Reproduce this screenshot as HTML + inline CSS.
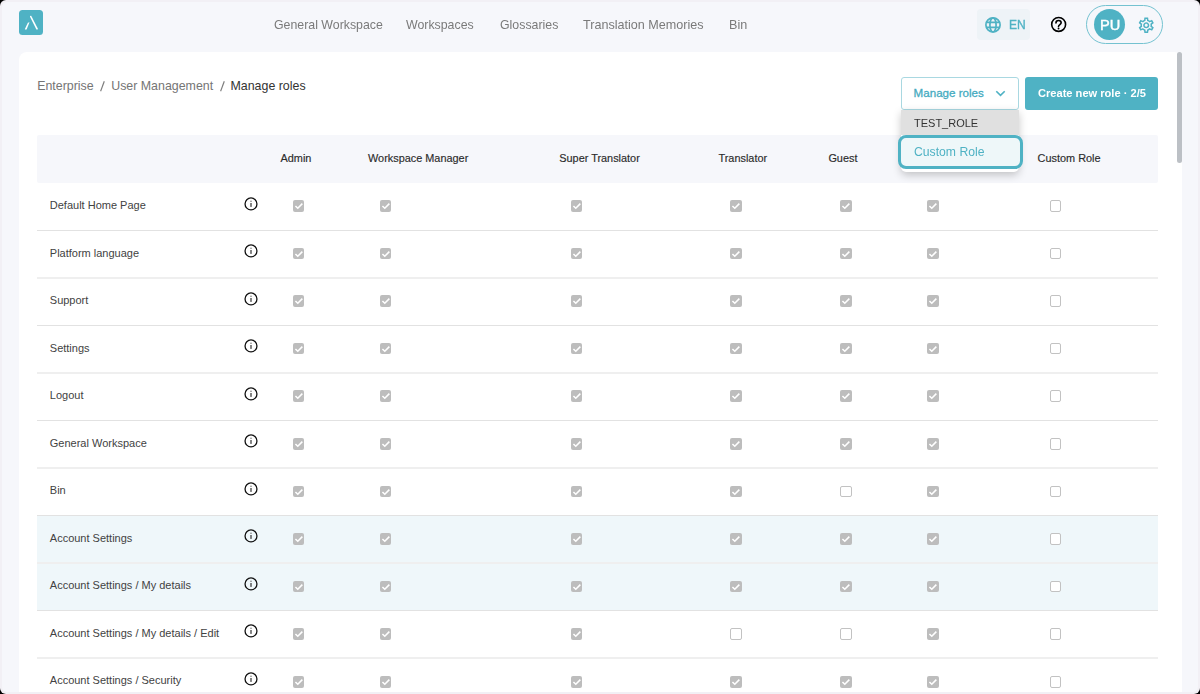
<!DOCTYPE html>
<html><head><meta charset="utf-8"><style>
html,body{margin:0;padding:0;width:1200px;height:694px;overflow:hidden;background:#000;}
*{box-sizing:border-box;}
.frame{position:absolute;left:0;top:0;width:1200px;height:694px;border-radius:6px;background:#f2f0f5;overflow:hidden;}
.page{position:absolute;left:2px;top:2px;width:1196px;height:690px;border-radius:5px;background:#f6f7fb;overflow:hidden;}
.abs{position:absolute;}
.t{position:absolute;white-space:nowrap;line-height:1;font-family:"Liberation Sans",sans-serif;}
.card{position:absolute;left:19px;top:52px;width:1163px;height:660px;background:#fff;border-radius:8px;}
.cb{position:absolute;width:11.7px;height:11.7px;border-radius:2px;}
.cb.on{background:#bdbdbd;}
.cb.off{border:1.7px solid #c2c2c2;background:#fff;}
.info{position:absolute;width:14px;height:14px;}
</style></head><body>
<div class="frame"><div class="page" id="pg">
<div class="abs" style="left:-2px;top:-2px;width:1200px;height:694px;">
<div class="abs" style="left:19px;top:10px;width:24.2px;height:24.8px;background:#4fb2c4;border-radius:3.5px;"></div>
<svg class="abs" style="left:19px;top:10px" width="25" height="25" viewBox="0 0 25 25"><path d="M10.9 6.4 Q11.1 5.4 12.2 5.7 L19.0 19.0 Q18.9 19.4 18.4 19.4 L17.4 19.4 Z" fill="#fff"/><path d="M8.9 12.8 L10.5 12.2 L7.7 19.2 Q7.5 19.4 7.1 19.4 L6.1 19.4 Q5.8 19.3 5.9 19.0 Z" fill="#fff"/></svg>
<div class="t" style="left:274.00px;top:18.85px;font-size:12.35px;color:#7a7a7a;font-weight:400;;will-change:transform">General Workspace</div>
<div class="t" style="left:406.00px;top:18.85px;font-size:12.35px;color:#7a7a7a;font-weight:400;;will-change:transform">Workspaces</div>
<div class="t" style="left:499.50px;top:18.85px;font-size:12.35px;color:#7a7a7a;font-weight:400;;will-change:transform">Glossaries</div>
<div class="t" style="left:582.70px;top:18.63px;font-size:12.6px;color:#7a7a7a;font-weight:400;;will-change:transform">Translation Memories</div>
<div class="t" style="left:728.80px;top:18.63px;font-size:12.6px;color:#7a7a7a;font-weight:400;;will-change:transform">Bin</div>
<div class="abs" style="left:977px;top:9.2px;width:53px;height:31px;background:#eef3f7;border-radius:4px;"></div>
<svg class="abs" style="left:984px;top:16px" width="18" height="18" viewBox="0 0 18 18"><g stroke="#4fb2c4" stroke-width="1.7" fill="none"><circle cx="9" cy="8.9" r="7.1"/><path d="M2.2 6.45H15.8M2.2 11.35H15.8"/><ellipse cx="9" cy="8.9" rx="3.1" ry="7.1"/></g></svg>
<div class="t" style="left:1008.80px;top:18.74px;font-size:12.0px;color:#4fb2c4;font-weight:400;-webkit-text-stroke:0.35px #4fb2c4;will-change:transform">EN</div>
<svg class="abs" style="left:1050px;top:15.9px" width="17" height="17" viewBox="0 0 17 17"><circle cx="8.64" cy="8.46" r="6.95" stroke="#000" stroke-width="1.6" fill="none"/>
<path d="M5.95 6.9C5.95 5.3 7.1 4.45 8.55 4.45C10.1 4.45 11.15 5.4 11.15 6.8C11.15 8.5 8.6 8.8 8.5 10.5" stroke="#000" stroke-width="1.6" fill="none" stroke-linecap="round"/><circle cx="8.55" cy="12.55" r="0.95" fill="#000"/></svg>
<div class="abs" style="left:1086.3px;top:5px;width:76.7px;height:39.3px;border:1.1px solid #74c2d0;border-radius:20px;"></div>
<div class="abs" style="left:1093.8px;top:9px;width:31.1px;height:31.1px;background:#4fb2c4;border-radius:50%;"></div>
<div class="t" style="left:1099.80px;top:17.94px;font-size:14.6px;color:#fff;font-weight:400;-webkit-text-stroke:0.45px #fff;will-change:transform">PU</div>
<svg class="abs" style="left:1137.2px;top:15.5px" width="18.5" height="18.5" viewBox="0 0 24 24"><path fill="#4fb2c4" d="M19.43 12.98c.04-.32.07-.64.07-.98 0-.34-.03-.66-.07-.98l2.11-1.650c.19-.15.24-.42.12-.64l-2-3.46c-.09-.16-.26-.25-.44-.25-.06 0-.12.01-.17.03l-2.49 1c-.52-.4-1.08-.73-1.690-.98l-.38-2.65C14.46 2.18 14.25 2 14 2h-4c-.25 0-.46.18-.49.42l-.38 2.65c-.61.25-1.17.59-1.69.98l-2.49-1c-.06-.02-.12-.03-.18-.03-.17 0-.34.09-.43.25l-2 3.46c-.13.22-.07.49.12.64l2.11 1.65c-.04.32-.07.65-.07.98 0 .33.03.66.07.98l-2.11 1.65c-.19.15-.24.42-.12.64l2 3.46c.09.16.26.25.44.25.06 0 .12-.01.17-.03l2.49-1c.52.4 1.08.73 1.69.98l.38 2.65c.03.24.24.42.49.42h4c.25 0 .46-.18.49-.42l.38-2.65c.61-.25 1.17-.59 1.69-.98l2.49 1c.06.02.12.03.18.03.17 0 .34-.09.43-.25l2-3.46c.12-.22.07-.49-.12-.64l-2.11-1.65zm-1.98-1.71c.04.31.05.52.05.73 0 .21-.02.43-.05.73l-.14 1.13.89.7 1.08.84-.7 1.21-1.27-.51-1.04-.42-.9.68c-.43.32-.84.56-1.25.73l-1.06.43-.16 1.13-.2 1.35h-1.4l-.19-1.35-.16-1.13-1.06-.43c-.43-.18-.83-.41-1.23-.71l-.91-.7-1.06.43-1.27.51-.7-1.21 1.08-.84.89-.7-.14-1.130c-.03-.31-.05-.54-.05-.74s.02-.43.05-.73l.14-1.13-.89-.7-1.08-.84.7-1.21 1.27.51 1.04.42.9-.68c.43-.32.84-.56 1.25-.73l1.06-.43.16-1.13.2-1.35h1.39l.19 1.35.16 1.13 1.06.43c.43.18.83.41 1.23.71l.91.7 1.06-.43 1.27-.51.7 1.21-1.07.85-.89.7.14 1.13zM12 8c-2.21 0-4 1.79-4 4s1.79 4 4 4 4-1.79 4-4-1.79-4-4-4zm0 6c-1.1 0-2-.9-2-2s.9-2 2-2 2 .9 2 2-.9 2-2 2z"/></svg>
<div class="card"></div>
<div class="abs" style="left:1177px;top:52px;width:4.5px;height:110.5px;background:#bcc0c5;border-radius:3px;"></div>
<div class="t" style="left:37.20px;top:80.00px;font-size:12.4px;color:#757575;font-weight:400;">Enterprise</div>
<svg class="abs" style="left:96px;top:76px" width="14" height="20"><path d="M8.3 5.2 L4.6 15.3" stroke="#7d7d7d" stroke-width="1.15"/></svg>
<div class="t" style="left:111.20px;top:80.00px;font-size:12.4px;color:#757575;font-weight:400;">User Management</div>
<svg class="abs" style="left:216px;top:76px" width="14" height="20"><path d="M8.3 5.2 L4.6 15.3" stroke="#7d7d7d" stroke-width="1.15"/></svg>
<div class="t" style="left:230.50px;top:80.00px;font-size:12.4px;color:#333;font-weight:400;">Manage roles</div>
<div class="abs" style="left:1025px;top:77px;width:133px;height:32.5px;background:#4fb2c4;border-radius:3px;"></div>
<div class="t" style="left:1037.50px;top:87.80px;font-size:11.1px;color:#fff;font-weight:700;;will-change:transform">Create new role · 2/5</div>
<div class="abs" style="left:37.3px;top:134.5px;width:1120.7px;height:48px;background:#f6f7fb;border-radius:2px;"></div>
<div class="t" style="left:280.50px;top:152.77px;font-size:10.9px;color:#2b2b2b;font-weight:400;-webkit-text-stroke:0.15px #2b2b2b">Admin</div>
<div class="t" style="left:368.00px;top:152.77px;font-size:10.9px;color:#2b2b2b;font-weight:400;-webkit-text-stroke:0.15px #2b2b2b">Workspace Manager</div>
<div class="t" style="left:559.30px;top:152.77px;font-size:10.9px;color:#2b2b2b;font-weight:400;-webkit-text-stroke:0.15px #2b2b2b">Super Translator</div>
<div class="t" style="left:718.50px;top:152.77px;font-size:10.9px;color:#2b2b2b;font-weight:400;-webkit-text-stroke:0.15px #2b2b2b">Translator</div>
<div class="t" style="left:828.40px;top:152.77px;font-size:10.9px;color:#2b2b2b;font-weight:400;-webkit-text-stroke:0.15px #2b2b2b">Guest</div>
<div class="t" style="left:915.50px;top:152.77px;font-size:10.9px;color:#2b2b2b;font-weight:400;-webkit-text-stroke:0.15px #2b2b2b">TEST_ROLE</div>
<div class="t" style="left:1037.60px;top:152.77px;font-size:10.9px;color:#2b2b2b;font-weight:400;-webkit-text-stroke:0.15px #2b2b2b">Custom Role</div>
<div class="abs" style="left:37px;top:515px;width:1121px;height:95px;background:#eff7fa;"></div>
<div class="abs" style="left:37px;top:230px;width:1121px;height:1px;background:#e2e2e2;"></div>
<div class="abs" style="left:37px;top:277px;width:1121px;height:2px;background:#efefef;"></div>
<div class="abs" style="left:37px;top:325px;width:1121px;height:1px;background:#e2e2e2;"></div>
<div class="abs" style="left:37px;top:372px;width:1121px;height:2px;background:#efefef;"></div>
<div class="abs" style="left:37px;top:420px;width:1121px;height:1px;background:#e2e2e2;"></div>
<div class="abs" style="left:37px;top:467px;width:1121px;height:2px;background:#efefef;"></div>
<div class="abs" style="left:37px;top:515px;width:1121px;height:1px;background:#e2e2e2;"></div>
<div class="abs" style="left:37px;top:562px;width:1121px;height:2px;background:#efefef;"></div>
<div class="abs" style="left:37px;top:610px;width:1121px;height:1px;background:#e2e2e2;"></div>
<div class="abs" style="left:37px;top:657px;width:1121px;height:2px;background:#efefef;"></div>
<div class="abs" style="left:37px;top:705px;width:1121px;height:1px;background:#e2e2e2;"></div>
<div class="t" style="left:49.80px;top:200.09px;font-size:11px;color:#424242;font-weight:400;">Default Home Page</div>
<svg class="info" style="left:244.1px;top:196.60px" viewBox="0 0 14 14"><circle cx="7" cy="6.9" r="5.95" stroke="#111" stroke-width="1.3" fill="none"/><rect x="6.45" y="6.0" width="1.1" height="3.9" fill="#222"/><rect x="6.45" y="3.7" width="1.1" height="1.1" fill="#444"/></svg>
<svg class="cb on" style="left:292.50px;top:199.90px" viewBox="0 0 12 12"><path d="M2.5 6.2 L4.9 8.5 L9.6 3.7" stroke="#fff" stroke-width="1.6" fill="none"/></svg>
<svg class="cb on" style="left:379.60px;top:199.90px" viewBox="0 0 12 12"><path d="M2.5 6.2 L4.9 8.5 L9.6 3.7" stroke="#fff" stroke-width="1.6" fill="none"/></svg>
<svg class="cb on" style="left:570.60px;top:199.90px" viewBox="0 0 12 12"><path d="M2.5 6.2 L4.9 8.5 L9.6 3.7" stroke="#fff" stroke-width="1.6" fill="none"/></svg>
<svg class="cb on" style="left:730.40px;top:199.90px" viewBox="0 0 12 12"><path d="M2.5 6.2 L4.9 8.5 L9.6 3.7" stroke="#fff" stroke-width="1.6" fill="none"/></svg>
<svg class="cb on" style="left:839.90px;top:199.90px" viewBox="0 0 12 12"><path d="M2.5 6.2 L4.9 8.5 L9.6 3.7" stroke="#fff" stroke-width="1.6" fill="none"/></svg>
<svg class="cb on" style="left:927.10px;top:199.90px" viewBox="0 0 12 12"><path d="M2.5 6.2 L4.9 8.5 L9.6 3.7" stroke="#fff" stroke-width="1.6" fill="none"/></svg>
<div class="cb off" style="left:1049.80px;top:199.90px"></div>
<div class="t" style="left:49.80px;top:247.59px;font-size:11px;color:#424242;font-weight:400;">Platform language</div>
<svg class="info" style="left:244.1px;top:244.10px" viewBox="0 0 14 14"><circle cx="7" cy="6.9" r="5.95" stroke="#111" stroke-width="1.3" fill="none"/><rect x="6.45" y="6.0" width="1.1" height="3.9" fill="#222"/><rect x="6.45" y="3.7" width="1.1" height="1.1" fill="#444"/></svg>
<svg class="cb on" style="left:292.50px;top:247.50px" viewBox="0 0 12 12"><path d="M2.5 6.2 L4.9 8.5 L9.6 3.7" stroke="#fff" stroke-width="1.6" fill="none"/></svg>
<svg class="cb on" style="left:379.60px;top:247.50px" viewBox="0 0 12 12"><path d="M2.5 6.2 L4.9 8.5 L9.6 3.7" stroke="#fff" stroke-width="1.6" fill="none"/></svg>
<svg class="cb on" style="left:570.60px;top:247.50px" viewBox="0 0 12 12"><path d="M2.5 6.2 L4.9 8.5 L9.6 3.7" stroke="#fff" stroke-width="1.6" fill="none"/></svg>
<svg class="cb on" style="left:730.40px;top:247.50px" viewBox="0 0 12 12"><path d="M2.5 6.2 L4.9 8.5 L9.6 3.7" stroke="#fff" stroke-width="1.6" fill="none"/></svg>
<svg class="cb on" style="left:839.90px;top:247.50px" viewBox="0 0 12 12"><path d="M2.5 6.2 L4.9 8.5 L9.6 3.7" stroke="#fff" stroke-width="1.6" fill="none"/></svg>
<svg class="cb on" style="left:927.10px;top:247.50px" viewBox="0 0 12 12"><path d="M2.5 6.2 L4.9 8.5 L9.6 3.7" stroke="#fff" stroke-width="1.6" fill="none"/></svg>
<div class="cb off" style="left:1049.80px;top:247.50px"></div>
<div class="t" style="left:49.80px;top:295.09px;font-size:11px;color:#424242;font-weight:400;">Support</div>
<svg class="info" style="left:244.1px;top:291.60px" viewBox="0 0 14 14"><circle cx="7" cy="6.9" r="5.95" stroke="#111" stroke-width="1.3" fill="none"/><rect x="6.45" y="6.0" width="1.1" height="3.9" fill="#222"/><rect x="6.45" y="3.7" width="1.1" height="1.1" fill="#444"/></svg>
<svg class="cb on" style="left:292.50px;top:295.10px" viewBox="0 0 12 12"><path d="M2.5 6.2 L4.9 8.5 L9.6 3.7" stroke="#fff" stroke-width="1.6" fill="none"/></svg>
<svg class="cb on" style="left:379.60px;top:295.10px" viewBox="0 0 12 12"><path d="M2.5 6.2 L4.9 8.5 L9.6 3.7" stroke="#fff" stroke-width="1.6" fill="none"/></svg>
<svg class="cb on" style="left:570.60px;top:295.10px" viewBox="0 0 12 12"><path d="M2.5 6.2 L4.9 8.5 L9.6 3.7" stroke="#fff" stroke-width="1.6" fill="none"/></svg>
<svg class="cb on" style="left:730.40px;top:295.10px" viewBox="0 0 12 12"><path d="M2.5 6.2 L4.9 8.5 L9.6 3.7" stroke="#fff" stroke-width="1.6" fill="none"/></svg>
<svg class="cb on" style="left:839.90px;top:295.10px" viewBox="0 0 12 12"><path d="M2.5 6.2 L4.9 8.5 L9.6 3.7" stroke="#fff" stroke-width="1.6" fill="none"/></svg>
<svg class="cb on" style="left:927.10px;top:295.10px" viewBox="0 0 12 12"><path d="M2.5 6.2 L4.9 8.5 L9.6 3.7" stroke="#fff" stroke-width="1.6" fill="none"/></svg>
<div class="cb off" style="left:1049.80px;top:295.10px"></div>
<div class="t" style="left:49.80px;top:342.59px;font-size:11px;color:#424242;font-weight:400;">Settings</div>
<svg class="info" style="left:244.1px;top:339.10px" viewBox="0 0 14 14"><circle cx="7" cy="6.9" r="5.95" stroke="#111" stroke-width="1.3" fill="none"/><rect x="6.45" y="6.0" width="1.1" height="3.9" fill="#222"/><rect x="6.45" y="3.7" width="1.1" height="1.1" fill="#444"/></svg>
<svg class="cb on" style="left:292.50px;top:342.70px" viewBox="0 0 12 12"><path d="M2.5 6.2 L4.9 8.5 L9.6 3.7" stroke="#fff" stroke-width="1.6" fill="none"/></svg>
<svg class="cb on" style="left:379.60px;top:342.70px" viewBox="0 0 12 12"><path d="M2.5 6.2 L4.9 8.5 L9.6 3.7" stroke="#fff" stroke-width="1.6" fill="none"/></svg>
<svg class="cb on" style="left:570.60px;top:342.70px" viewBox="0 0 12 12"><path d="M2.5 6.2 L4.9 8.5 L9.6 3.7" stroke="#fff" stroke-width="1.6" fill="none"/></svg>
<svg class="cb on" style="left:730.40px;top:342.70px" viewBox="0 0 12 12"><path d="M2.5 6.2 L4.9 8.5 L9.6 3.7" stroke="#fff" stroke-width="1.6" fill="none"/></svg>
<svg class="cb on" style="left:839.90px;top:342.70px" viewBox="0 0 12 12"><path d="M2.5 6.2 L4.9 8.5 L9.6 3.7" stroke="#fff" stroke-width="1.6" fill="none"/></svg>
<svg class="cb on" style="left:927.10px;top:342.70px" viewBox="0 0 12 12"><path d="M2.5 6.2 L4.9 8.5 L9.6 3.7" stroke="#fff" stroke-width="1.6" fill="none"/></svg>
<div class="cb off" style="left:1049.80px;top:342.70px"></div>
<div class="t" style="left:49.80px;top:390.09px;font-size:11px;color:#424242;font-weight:400;">Logout</div>
<svg class="info" style="left:244.1px;top:386.60px" viewBox="0 0 14 14"><circle cx="7" cy="6.9" r="5.95" stroke="#111" stroke-width="1.3" fill="none"/><rect x="6.45" y="6.0" width="1.1" height="3.9" fill="#222"/><rect x="6.45" y="3.7" width="1.1" height="1.1" fill="#444"/></svg>
<svg class="cb on" style="left:292.50px;top:390.30px" viewBox="0 0 12 12"><path d="M2.5 6.2 L4.9 8.5 L9.6 3.7" stroke="#fff" stroke-width="1.6" fill="none"/></svg>
<svg class="cb on" style="left:379.60px;top:390.30px" viewBox="0 0 12 12"><path d="M2.5 6.2 L4.9 8.5 L9.6 3.7" stroke="#fff" stroke-width="1.6" fill="none"/></svg>
<svg class="cb on" style="left:570.60px;top:390.30px" viewBox="0 0 12 12"><path d="M2.5 6.2 L4.9 8.5 L9.6 3.7" stroke="#fff" stroke-width="1.6" fill="none"/></svg>
<svg class="cb on" style="left:730.40px;top:390.30px" viewBox="0 0 12 12"><path d="M2.5 6.2 L4.9 8.5 L9.6 3.7" stroke="#fff" stroke-width="1.6" fill="none"/></svg>
<svg class="cb on" style="left:839.90px;top:390.30px" viewBox="0 0 12 12"><path d="M2.5 6.2 L4.9 8.5 L9.6 3.7" stroke="#fff" stroke-width="1.6" fill="none"/></svg>
<svg class="cb on" style="left:927.10px;top:390.30px" viewBox="0 0 12 12"><path d="M2.5 6.2 L4.9 8.5 L9.6 3.7" stroke="#fff" stroke-width="1.6" fill="none"/></svg>
<div class="cb off" style="left:1049.80px;top:390.30px"></div>
<div class="t" style="left:49.80px;top:437.59px;font-size:11px;color:#424242;font-weight:400;">General Workspace</div>
<svg class="info" style="left:244.1px;top:434.10px" viewBox="0 0 14 14"><circle cx="7" cy="6.9" r="5.95" stroke="#111" stroke-width="1.3" fill="none"/><rect x="6.45" y="6.0" width="1.1" height="3.9" fill="#222"/><rect x="6.45" y="3.7" width="1.1" height="1.1" fill="#444"/></svg>
<svg class="cb on" style="left:292.50px;top:437.90px" viewBox="0 0 12 12"><path d="M2.5 6.2 L4.9 8.5 L9.6 3.7" stroke="#fff" stroke-width="1.6" fill="none"/></svg>
<svg class="cb on" style="left:379.60px;top:437.90px" viewBox="0 0 12 12"><path d="M2.5 6.2 L4.9 8.5 L9.6 3.7" stroke="#fff" stroke-width="1.6" fill="none"/></svg>
<svg class="cb on" style="left:570.60px;top:437.90px" viewBox="0 0 12 12"><path d="M2.5 6.2 L4.9 8.5 L9.6 3.7" stroke="#fff" stroke-width="1.6" fill="none"/></svg>
<svg class="cb on" style="left:730.40px;top:437.90px" viewBox="0 0 12 12"><path d="M2.5 6.2 L4.9 8.5 L9.6 3.7" stroke="#fff" stroke-width="1.6" fill="none"/></svg>
<svg class="cb on" style="left:839.90px;top:437.90px" viewBox="0 0 12 12"><path d="M2.5 6.2 L4.9 8.5 L9.6 3.7" stroke="#fff" stroke-width="1.6" fill="none"/></svg>
<svg class="cb on" style="left:927.10px;top:437.90px" viewBox="0 0 12 12"><path d="M2.5 6.2 L4.9 8.5 L9.6 3.7" stroke="#fff" stroke-width="1.6" fill="none"/></svg>
<div class="cb off" style="left:1049.80px;top:437.90px"></div>
<div class="t" style="left:49.80px;top:485.09px;font-size:11px;color:#424242;font-weight:400;">Bin</div>
<svg class="info" style="left:244.1px;top:481.60px" viewBox="0 0 14 14"><circle cx="7" cy="6.9" r="5.95" stroke="#111" stroke-width="1.3" fill="none"/><rect x="6.45" y="6.0" width="1.1" height="3.9" fill="#222"/><rect x="6.45" y="3.7" width="1.1" height="1.1" fill="#444"/></svg>
<svg class="cb on" style="left:292.50px;top:485.50px" viewBox="0 0 12 12"><path d="M2.5 6.2 L4.9 8.5 L9.6 3.7" stroke="#fff" stroke-width="1.6" fill="none"/></svg>
<svg class="cb on" style="left:379.60px;top:485.50px" viewBox="0 0 12 12"><path d="M2.5 6.2 L4.9 8.5 L9.6 3.7" stroke="#fff" stroke-width="1.6" fill="none"/></svg>
<svg class="cb on" style="left:570.60px;top:485.50px" viewBox="0 0 12 12"><path d="M2.5 6.2 L4.9 8.5 L9.6 3.7" stroke="#fff" stroke-width="1.6" fill="none"/></svg>
<svg class="cb on" style="left:730.40px;top:485.50px" viewBox="0 0 12 12"><path d="M2.5 6.2 L4.9 8.5 L9.6 3.7" stroke="#fff" stroke-width="1.6" fill="none"/></svg>
<div class="cb off" style="left:839.90px;top:485.50px"></div>
<svg class="cb on" style="left:927.10px;top:485.50px" viewBox="0 0 12 12"><path d="M2.5 6.2 L4.9 8.5 L9.6 3.7" stroke="#fff" stroke-width="1.6" fill="none"/></svg>
<div class="cb off" style="left:1049.80px;top:485.50px"></div>
<div class="t" style="left:49.80px;top:532.59px;font-size:11px;color:#424242;font-weight:400;">Account Settings</div>
<svg class="info" style="left:244.1px;top:529.10px" viewBox="0 0 14 14"><circle cx="7" cy="6.9" r="5.95" stroke="#111" stroke-width="1.3" fill="none"/><rect x="6.45" y="6.0" width="1.1" height="3.9" fill="#222"/><rect x="6.45" y="3.7" width="1.1" height="1.1" fill="#444"/></svg>
<svg class="cb on" style="left:292.50px;top:533.10px" viewBox="0 0 12 12"><path d="M2.5 6.2 L4.9 8.5 L9.6 3.7" stroke="#fff" stroke-width="1.6" fill="none"/></svg>
<svg class="cb on" style="left:379.60px;top:533.10px" viewBox="0 0 12 12"><path d="M2.5 6.2 L4.9 8.5 L9.6 3.7" stroke="#fff" stroke-width="1.6" fill="none"/></svg>
<svg class="cb on" style="left:570.60px;top:533.10px" viewBox="0 0 12 12"><path d="M2.5 6.2 L4.9 8.5 L9.6 3.7" stroke="#fff" stroke-width="1.6" fill="none"/></svg>
<svg class="cb on" style="left:730.40px;top:533.10px" viewBox="0 0 12 12"><path d="M2.5 6.2 L4.9 8.5 L9.6 3.7" stroke="#fff" stroke-width="1.6" fill="none"/></svg>
<svg class="cb on" style="left:839.90px;top:533.10px" viewBox="0 0 12 12"><path d="M2.5 6.2 L4.9 8.5 L9.6 3.7" stroke="#fff" stroke-width="1.6" fill="none"/></svg>
<svg class="cb on" style="left:927.10px;top:533.10px" viewBox="0 0 12 12"><path d="M2.5 6.2 L4.9 8.5 L9.6 3.7" stroke="#fff" stroke-width="1.6" fill="none"/></svg>
<div class="cb off" style="left:1049.80px;top:533.10px"></div>
<div class="t" style="left:49.80px;top:580.09px;font-size:11px;color:#424242;font-weight:400;">Account Settings / My details</div>
<svg class="info" style="left:244.1px;top:576.60px" viewBox="0 0 14 14"><circle cx="7" cy="6.9" r="5.95" stroke="#111" stroke-width="1.3" fill="none"/><rect x="6.45" y="6.0" width="1.1" height="3.9" fill="#222"/><rect x="6.45" y="3.7" width="1.1" height="1.1" fill="#444"/></svg>
<svg class="cb on" style="left:292.50px;top:580.70px" viewBox="0 0 12 12"><path d="M2.5 6.2 L4.9 8.5 L9.6 3.7" stroke="#fff" stroke-width="1.6" fill="none"/></svg>
<svg class="cb on" style="left:379.60px;top:580.70px" viewBox="0 0 12 12"><path d="M2.5 6.2 L4.9 8.5 L9.6 3.7" stroke="#fff" stroke-width="1.6" fill="none"/></svg>
<svg class="cb on" style="left:570.60px;top:580.70px" viewBox="0 0 12 12"><path d="M2.5 6.2 L4.9 8.5 L9.6 3.7" stroke="#fff" stroke-width="1.6" fill="none"/></svg>
<svg class="cb on" style="left:730.40px;top:580.70px" viewBox="0 0 12 12"><path d="M2.5 6.2 L4.9 8.5 L9.6 3.7" stroke="#fff" stroke-width="1.6" fill="none"/></svg>
<svg class="cb on" style="left:839.90px;top:580.70px" viewBox="0 0 12 12"><path d="M2.5 6.2 L4.9 8.5 L9.6 3.7" stroke="#fff" stroke-width="1.6" fill="none"/></svg>
<svg class="cb on" style="left:927.10px;top:580.70px" viewBox="0 0 12 12"><path d="M2.5 6.2 L4.9 8.5 L9.6 3.7" stroke="#fff" stroke-width="1.6" fill="none"/></svg>
<div class="cb off" style="left:1049.80px;top:580.70px"></div>
<div class="t" style="left:49.80px;top:627.59px;font-size:11px;color:#424242;font-weight:400;">Account Settings / My details / Edit</div>
<svg class="info" style="left:244.1px;top:624.10px" viewBox="0 0 14 14"><circle cx="7" cy="6.9" r="5.95" stroke="#111" stroke-width="1.3" fill="none"/><rect x="6.45" y="6.0" width="1.1" height="3.9" fill="#222"/><rect x="6.45" y="3.7" width="1.1" height="1.1" fill="#444"/></svg>
<svg class="cb on" style="left:292.50px;top:628.30px" viewBox="0 0 12 12"><path d="M2.5 6.2 L4.9 8.5 L9.6 3.7" stroke="#fff" stroke-width="1.6" fill="none"/></svg>
<svg class="cb on" style="left:379.60px;top:628.30px" viewBox="0 0 12 12"><path d="M2.5 6.2 L4.9 8.5 L9.6 3.7" stroke="#fff" stroke-width="1.6" fill="none"/></svg>
<svg class="cb on" style="left:570.60px;top:628.30px" viewBox="0 0 12 12"><path d="M2.5 6.2 L4.9 8.5 L9.6 3.7" stroke="#fff" stroke-width="1.6" fill="none"/></svg>
<div class="cb off" style="left:730.40px;top:628.30px"></div>
<div class="cb off" style="left:839.90px;top:628.30px"></div>
<svg class="cb on" style="left:927.10px;top:628.30px" viewBox="0 0 12 12"><path d="M2.5 6.2 L4.9 8.5 L9.6 3.7" stroke="#fff" stroke-width="1.6" fill="none"/></svg>
<div class="cb off" style="left:1049.80px;top:628.30px"></div>
<div class="t" style="left:49.80px;top:675.09px;font-size:11px;color:#424242;font-weight:400;">Account Settings / Security</div>
<svg class="info" style="left:244.1px;top:671.60px" viewBox="0 0 14 14"><circle cx="7" cy="6.9" r="5.95" stroke="#111" stroke-width="1.3" fill="none"/><rect x="6.45" y="6.0" width="1.1" height="3.9" fill="#222"/><rect x="6.45" y="3.7" width="1.1" height="1.1" fill="#444"/></svg>
<svg class="cb on" style="left:292.50px;top:675.90px" viewBox="0 0 12 12"><path d="M2.5 6.2 L4.9 8.5 L9.6 3.7" stroke="#fff" stroke-width="1.6" fill="none"/></svg>
<svg class="cb on" style="left:379.60px;top:675.90px" viewBox="0 0 12 12"><path d="M2.5 6.2 L4.9 8.5 L9.6 3.7" stroke="#fff" stroke-width="1.6" fill="none"/></svg>
<svg class="cb on" style="left:570.60px;top:675.90px" viewBox="0 0 12 12"><path d="M2.5 6.2 L4.9 8.5 L9.6 3.7" stroke="#fff" stroke-width="1.6" fill="none"/></svg>
<svg class="cb on" style="left:730.40px;top:675.90px" viewBox="0 0 12 12"><path d="M2.5 6.2 L4.9 8.5 L9.6 3.7" stroke="#fff" stroke-width="1.6" fill="none"/></svg>
<svg class="cb on" style="left:839.90px;top:675.90px" viewBox="0 0 12 12"><path d="M2.5 6.2 L4.9 8.5 L9.6 3.7" stroke="#fff" stroke-width="1.6" fill="none"/></svg>
<svg class="cb on" style="left:927.10px;top:675.90px" viewBox="0 0 12 12"><path d="M2.5 6.2 L4.9 8.5 L9.6 3.7" stroke="#fff" stroke-width="1.6" fill="none"/></svg>
<div class="cb off" style="left:1049.80px;top:675.90px"></div>
<div class="abs" style="left:901.2px;top:77.4px;width:117.6px;height:32.2px;border:1px solid #a9d8e1;border-radius:3px;background:#fff;"></div>
<div class="t" style="left:913.60px;top:87.08px;font-size:11.6px;color:#45abbf;font-weight:400;-webkit-text-stroke:0.3px #45abbf">Manage roles</div>
<svg class="abs" style="left:995px;top:90px" width="11" height="7" viewBox="0 0 11 7"><path d="M1.3 1.2 L5.5 5.4 L9.7 1.2" stroke="#4fb2c4" stroke-width="1.6" fill="none"/></svg>
<div class="abs" style="left:901.1px;top:110px;width:118.4px;height:62px;background:#fff;border-radius:0 0 5px 5px;box-shadow:0 3px 8px rgba(0,0,0,0.22);"></div>
<div class="abs" style="left:901.1px;top:110px;width:118.4px;height:25px;background:#e0e0e0;"></div>
<div class="t" style="left:913.50px;top:118.19px;font-size:11.0px;color:#333;font-weight:400;;will-change:transform">TEST_ROLE</div>
<div class="abs" style="left:898.2px;top:135.3px;width:124.8px;height:33.4px;background:#eef7f9;border:3px solid #4fb2c4;border-radius:8px;"></div>
<div class="t" style="left:913.50px;top:145.67px;font-size:12.2px;color:#4fb2c4;font-weight:400;;will-change:transform">Custom Role</div>
</div>
</div></div>
</body></html>
